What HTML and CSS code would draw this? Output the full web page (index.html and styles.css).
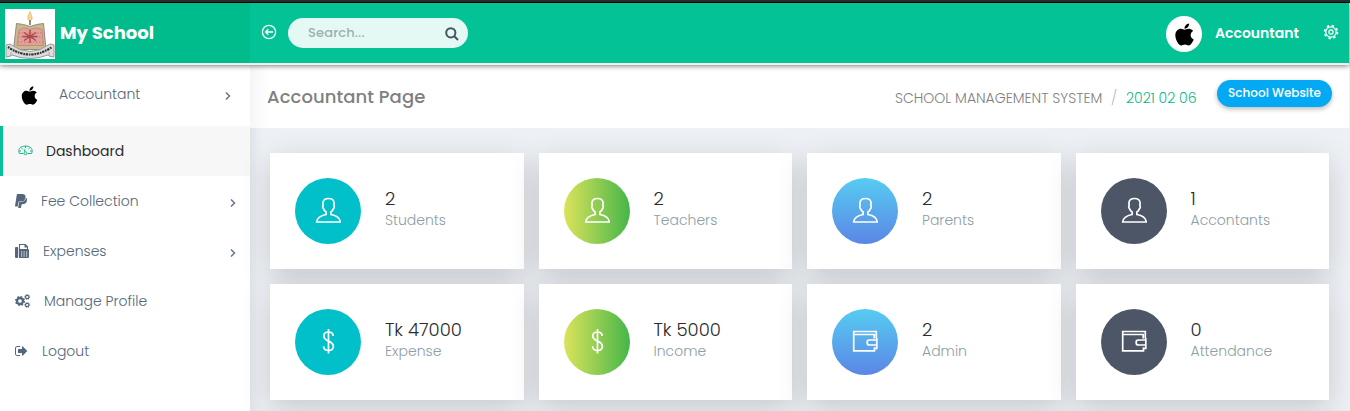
FILE: index.html
```html
<!DOCTYPE html>
<html lang="en">
<head>
<meta charset="utf-8">
<title>Accountant Page</title>
<link rel="stylesheet" href="styles.css">
</head>
<body>
<svg class="defs" width="0" height="0">
  <symbol id="apple" viewBox="0 0 384 512"><path d="M318.7 268.7c-.2-36.7 16.4-64.4 50-84.8-18.8-26.9-47.2-41.7-84.7-44.6-35.5-2.8-74.3 20.7-88.500 20.7-15 0-49.4-19.7-76.4-19.7C63.3 141.2 4 184.8 4 273.5q0 39.3 14.4 81.2c12.8 36.7 59 126.700 107.2 125.2 25.2-.6 43-17.9 75.8-17.9 31.8 0 48.3 17.9 76.4 17.9 48.6-.7 90.4-82.5 102.6-119.3-65.2-30.7-61.7-90-61.7-91.9zm-56.6-164.2c27.3-32.4 24.8-61.9 24-72.5-24.1 1.4-52 16.4-67.9 34.9-17.5 19.8-27.8 44.3-25.6 71.9 26.1 2 49.9-11.4 69.5-34.3z"/></symbol>
  <symbol id="person" viewBox="0 0 26 26"><path d="M13.500 1.500c-3.700 0-5.600 2-5.600 4.800 0 1 .3 1.700.2 2.500-.7.800-.3 2.400.5 2.900.3 1.300 1.300 2.500 2.500 3.300v2.500C6.500 18.300 2.200 20.500 1.700 25H25.300C24.800 20.500 20.500 18.300 15.900 17.500v-2.500c1.200-.8 2.200-2 2.500-3.300.8-.5 1.200-2.100.5-2.900-.1-.8.2-1.500.2-2.500C19.100 3.500 17.200 1.500 13.500 1.500z"/></symbol>
  <symbol id="dollar" viewBox="0 0 26 26"><path d="M13.500 1v24.500M18.200 8C18.200 5.500 16.500 4 13.500 4S8.800 5.500 8.800 8c0 6 9.600 4.300 9.600 10.300 0 2.800-1.800 4.200-4.900 4.200s-4.900-1.400-4.900-4.200"/></symbol>
  <symbol id="wallet" viewBox="0 0 26 26"><path d="M24.300 10.500V3.500H1.700v19.300h20.800v-3.600M1.700 6.500h20.500v4M24.800 12h-7.300c-1.500 0-2.300.8-2.300 1.800v1.200c0 1.300.8 2 2.300 2h7.300zM24.800 10v10.500h-2.300"/></symbol>
  <symbol id="chevron" viewBox="0 0 8 10"><path d="M2 1.500 5.500 5 2 8.500"/></symbol>
</svg>

<div class="window-edge"></div>
<header class="topbar">
  <div class="brand">
    <svg class="crest" viewBox="0 0 50 50">
      <path class="crest-flame" d="M25 1c-1 4-3 5-2.500 9 .3 2 4.500 2 5 0 .5-4-1.700-5-2.500-9z"/>
      <path class="crest-core" d="M25 5v6"/>
      <path class="crest-wick" d="M25 11v5"/>
      <path class="crest-book" d="M11.500 14.500q7 .5 13.500 3 6.500-2.500 13.500-3L41 40.500H8.500z"/>
      <path class="crest-map" d="M14 21l5-2 6 1.500 6-1.500 6 1.500 1.500 16H12z"/>
      <path class="crest-pattern" d="M14 24h23M13 28h25M13 33h25"/>
      <path class="crest-star" d="M25 21v13M19 23.500l12 8M19 31.500l12-8M17.500 27.500h15"/>
      <path class="crest-ribbon" d="M1 36l4-1q20 15 40 0l4 1v12l-5-1-1-1q-18 7-36 0l-1 1-5 1z"/>
      <path class="crest-motto" d="M3 38q22 15 44 0"/>
      <path class="crest-fold" d="M6 47v-4M44 47v-4"/>
    </svg>
    <span class="brand-name">My School</span>
  </div>
  <svg class="collapse" viewBox="0 0 16 16"><circle cx="8" cy="8" r="6.600"/><path d="M12 8H4.500M7.300 5.200 4.500 8l2.800 2.800"/></svg>
  <div class="search">
    <span class="search-hint">Search...</span>
    <svg class="search-icon" viewBox="0 0 14 14"><circle cx="5.800" cy="5.800" r="4.600"/><path d="M9.300 9.300l3.700 3.700"/></svg>
  </div>
  <div class="account">
    <span class="avatar"><svg><use href="#apple"/></svg></span>
    <span class="account-name">Accountant</span>
    <svg class="gear" viewBox="0 0 16 16"><circle class="gear-teeth" cx="8" cy="8" r="6.400"/><circle cx="8" cy="8" r="5.200"/><circle cx="8" cy="8" r="2.100"/></svg>
  </div>
</header>

<div class="shell">
  <nav class="sidebar">
    <a class="item profile">
      <svg class="profile-icon"><use href="#apple"/></svg>
      <span class="t-profile">Accountant</span>
      <svg class="chevron"><use href="#chevron"/></svg>
    </a>
    <a class="item active">
      <svg class="icon gauge" viewBox="0 0 15 15"><path d="M5.500 11.500H1.500C-.8 7.500 2.500 4 7.500 4s8.300 3.500 6 7.500H9.500M7.500 4v2M3.300 5.800l1.300 1.200M11.700 5.800l-1.300 1.200M1 9h2M12 9h2M6 7l1 3"/><circle cx="7.500" cy="11.300" r="1.500"/></svg>
      <span class="t-dash">Dashboard</span>
    </a>
    <a class="item">
      <svg class="icon paypal" viewBox="0 0 384 512"><path d="M111.400 295.900c-3.500 19.200-17.400 108.700-21.500 134-.3 1.800-1 2.500-3 2.500H12.300c-7.600 0-13.100-6.600-12.100-13.900L58.800 46.600c1.500-9.600 10.100-16.900 20-16.900 152.300 0 165.100-3.700 204 11.400 60.100 23.300 65.600 79.500 44 140.300-21.500 62.600-72.500 89.500-140.100 90.300-43.400.7-69.500-7-75.300 24.200zM357.100 152c-1.800-1.300-2.500-1.800-3 1.300-2 11.400-5.100 22.500-8.800 33.600-39.900 113.800-150.500 103.900-204.500 103.900-6.100 0-10.100 3.300-10.900 9.400-22.600 140.400-27.100 169.700-27.100 169.700-1 7.100 3.500 12.900 10.600 12.900h63.500c8.600 0 15.700-6.300 17.400-14.900.7-5.400-1.100 6.100 14.400-91.300 4.600-22 14.300-19.700 29.300-19.700 71 0 126.400-28.800 142.900-112.300 6.500-34.800 4.600-71.400-23.800-92.600z"/></svg>
      <span class="t-fee">Fee Collection</span>
      <svg class="chevron"><use href="#chevron"/></svg>
    </a>
    <a class="item">
      <svg class="icon fax" viewBox="0 0 14 14"><path fill-rule="evenodd" d="M0 4q0-1 1-1h1.200q1 0 1 1v9q0 1-1 1H1q-1 0-1-1zM4 0h6.500L13 2.500V5q1 .3 1 1.200V13q0 1-1 1H4zM5 1v4h7V3.500h-2.500V1zM6 7.500v1h1.200v-1zM8.500 7.500v1h1.200v-1zM11 7.500v1h1.200v-1zM6 9.500v1h1.200v-1zM8.500 9.500v1h1.200v-1zM11 9.500v1h1.200v-1zM6 11.500v1h1.200v-1zM8.500 11.500v1h1.200v-1zM11 11.500v1h1.200v-1z"/></svg>
      <span class="t-exp">Expenses</span>
      <svg class="chevron"><use href="#chevron"/></svg>
    </a>
    <a class="item">
      <svg class="icon cogs" viewBox="0 0 15 14"><circle class="ring" cx="5" cy="7" r="3"/><circle class="teeth" cx="5" cy="7" r="4.400"/><circle class="ring-s" cx="12.200" cy="3" r="1.700"/><circle class="teeth-s" cx="12.200" cy="3" r="2.500"/><circle class="ring-s" cx="12.200" cy="11" r="1.700"/><circle class="teeth-s" cx="12.200" cy="11" r="2.500"/></svg>
      <span class="t-manage">Manage Profile</span>
    </a>
    <a class="item">
      <svg class="icon exit" viewBox="0 0 1664 1792"><path d="M640 1440q0 4 1 20t.5 26.500-3 23.500-10 19.500-20.500 6.500h-320q-119 0-203.500-84.500t-84.500-203.500v-704q0-119 84.500-203.500t203.500-84.500h320q13 0 22.500 9.500t9.500 22.500q0 4 1 20t.5 26.500-3 23.500-10 19.500-20.500 6.500h-320q-66 0-113 47t-47 113v704q0 66 47 113t113 47h312l11.500 1 11.500 3 8 5.500 7 9 2 13.500zm928-544q0 26-19 45l-544 544q-19 19-45 19t-45-19-19-45v-288h-448q-26 0-45-19t-19-45v-384q0-26 19-45t45-19h448v-288q0-26 19-45t45-19 45 19l544 544q19 19 19 45z"/></svg>
      <span class="t-logout">Logout</span>
    </a>
  </nav>

  <main class="main">
    <div class="titlebar">
      <h1 class="title">Accountant Page</h1>
      <div class="crumbs">
        <span class="system">SCHOOL MANAGEMENT SYSTEM</span>
        <span class="slash">/</span>
        <span class="date">2021 02 06</span>
      </div>
      <a class="site-button">School Website</a>
    </div>
    <section class="cards">
      <article class="card"><span class="badge teal"><svg><use href="#person"/></svg></span><div><div class="value">2</div><div class="label">Students</div></div></article>
      <article class="card"><span class="badge lime"><svg><use href="#person"/></svg></span><div><div class="value">2</div><div class="label">Teachers</div></div></article>
      <article class="card"><span class="badge blue"><svg><use href="#person"/></svg></span><div><div class="value">2</div><div class="label">Parents</div></div></article>
      <article class="card"><span class="badge slate"><svg><use href="#person"/></svg></span><div><div class="value">1</div><div class="label">Accontants</div></div></article>
      <article class="card"><span class="badge teal"><svg><use href="#dollar"/></svg></span><div><div class="value">Tk 47000</div><div class="label">Expense</div></div></article>
      <article class="card"><span class="badge lime"><svg><use href="#dollar"/></svg></span><div><div class="value">Tk 5000</div><div class="label">Income</div></div></article>
      <article class="card"><span class="badge blue"><svg><use href="#wallet"/></svg></span><div><div class="value">2</div><div class="label">Admin</div></div></article>
      <article class="card"><span class="badge slate"><svg><use href="#wallet"/></svg></span><div><div class="value">0</div><div class="label">Attendance</div></div></article>
    </section>
  </main>
</div>
</body>
</html>
```
FILE: styles.css
```css
* { box-sizing: border-box; }
html, body { height: 100%; overflow: hidden; }
body {
  margin: 0;
  display: flex;
  flex-direction: column;
  background: #edf1f5;
  font-family: Poppins, Inter, "Open Sans", sans-serif;
  font-weight: 300;
  font-size: 14px;
  color: #54667a;
}
svg { display: block; flex: none; overflow: visible; }
span, h1, .value, .label, .site-button { white-space: nowrap; }
.defs { display: none; }

.window-edge { flex: none; height: 3px; background: #2d2d30; border-bottom: 1px solid #000; }

.topbar {
  position: relative;
  z-index: 2;
  flex: none;
  height: 62px;
  width: 1349px;
  display: flex;
  background: #03c396;
  border-bottom: 2px solid #f0f0f0;
  box-shadow: 0 1px 5px rgba(0, 0, 0, .5);
}
.brand { width: 250px; padding: 6px 0 0 5px; display: flex; background: #00bb8b; }
.crest { width: 50px; height: 50px; background: #fff; margin-right: 5px; }
.crest path { fill: none; stroke-width: 1; }
.crest .crest-flame { fill: #f3c27c; }
.crest .crest-core { stroke: #fff0c0; }
.crest .crest-wick { stroke: #74644f; stroke-width: 1.500; }
.crest .crest-book { fill: #c8b98d; stroke: #8f8b80; }
.crest .crest-map { fill: #dfa29b; stroke: #c98880; }
.crest .crest-pattern { stroke: #c97570; stroke-dasharray: 1.500 1.500; }
.crest .crest-star { stroke: #b0454a; stroke-width: 1.500; }
.crest .crest-ribbon { fill: #dcdcdc; stroke: #999; }
.crest .crest-motto { stroke: #333; stroke-width: 2.200; stroke-dasharray: 1.600 .7 2.500 .8; }
.crest .crest-fold { stroke: #aaa; }
.brand-name { color: #fff; font-size: 18px; font-weight: 700; line-height: 48px; }
.collapse { width: 16px; height: 16px; margin: 21px 11px 0; fill: none; stroke: #fff; stroke-width: 1.300; }
.search {
  width: 180px;
  height: 30px;
  margin-top: 15px;
  padding: 0 9px 0 20px;
  display: flex;
  align-items: center;
  justify-content: space-between;
  border-radius: 15px;
  background: #e5f9f4;
}
.search-hint { color: #9eb0b2; font-size: 13px; font-weight: 500; letter-spacing: .15px; }
.search-icon { width: 14px; height: 14px; margin-top: 1px; fill: none; stroke: #465366; stroke-width: 2; }
.account { margin-left: auto; padding-right: 10.500px; display: flex; align-items: flex-start; }
.avatar { width: 36px; height: 36px; margin: 13px 13px 0 0; display: flex; justify-content: center; border-radius: 50%; background: #fff; fill: #000; }
.avatar svg { width: 19px; height: 25px; margin-top: 5.500px; }
.account-name { width: 84px; margin-right: 23.500px; color: #fff; font-weight: 600; line-height: 60px; }
.gear { width: 16px; height: 16px; margin-top: 21px; fill: none; stroke: #fff; stroke-width: 1.200; }
.gear-teeth { stroke-width: 1.800; stroke-dasharray: 2.300 2.726; }

.shell { flex: 1; display: flex; min-height: 0; }
.sidebar { flex: none; width: 250px; background: #fff; }
.item { height: 50px; padding: 0 14px 0 15px; display: flex; align-items: center; }
.profile { height: 61px; padding: 0 19px 2px 21px; }
.profile-icon { width: 17px; height: 21px; margin: 1px 21px 0 0; fill: #000; }
.profile .chevron { margin-top: 2px; }
.active { padding-left: 15px; border-left: 3px solid #03c396; background: #f7f7f7; color: #2b2b2b; font-weight: 400; }
.icon { fill: #54667a; }
.gauge { width: 15px; height: 15px; margin-right: 13px; fill: none; stroke: #18bb8a; stroke-width: 1; margin-top: -3px; }
.paypal { width: 12px; height: 16px; margin-right: 14px; }
.fax { width: 14px; height: 14px; margin-right: 14px; }
.cogs { width: 15px; height: 14px; margin-right: 14px; fill: none; stroke: #54667a; }
.ring { stroke-width: 2.300; }
.teeth { stroke-width: 1.300; stroke-dasharray: 1.800 1.656; }
.ring-s { stroke-width: 1.200; }
.teeth-s { stroke-width: .8; stroke-dasharray: 1 .963; }
.exit { width: 13px; height: 14px; margin-right: 14px; }
.chevron { width: 8px; height: 10px; margin: 4px -1px 0 auto; fill: none; stroke: #66768a; stroke-width: 1.500; }

.main { flex: 1; box-shadow: inset 10px 0 14px -8px rgba(0, 0, 0, .09); }
.titlebar { height: 63px; margin-right: 1px; padding: 0 17px; display: flex; background: linear-gradient(90deg, #f6f6f6, #fff 20px); }
.title { margin: 0; color: #808080; font-size: 18px; font-weight: 500; line-height: 63px; letter-spacing: .08px; }
.crumbs { margin-left: auto; display: flex; line-height: 66px; color: #808080; }
.system { width: 207px; }
.slash { width: 24px; text-align: center; color: #bbb; }
.date { width: 70px; margin-right: 21px; color: #03b98c; }
.site-button {
  width: 115px;
  height: 27px;
  margin-top: 15px;
  border-radius: 14px;
  background: #03a9f3;
  color: #fff;
  font-size: 12px;
  font-weight: 500;
  line-height: 26px;
  text-align: center;
  box-shadow: 0 2px 5px rgba(0, 0, 0, .28);
}
.cards { padding: 25px 21px 0 20px; display: grid; grid-template-columns: repeat(4, 1fr); gap: 15px; }
.card { height: 116px; padding: 25px; display: flex; gap: 24px; background: #fff; box-shadow: 0 8px 28px rgba(0, 0, 0, .17); }
.badge { flex: none; width: 66px; height: 66px; display: flex; align-items: center; justify-content: center; border-radius: 50%; }
.badge svg { width: 26px; height: 26px; margin-top: -3px; fill: none; stroke: #fff; stroke-width: 1.700; }
.teal { background: #02c0ca; }
.lime { background: linear-gradient(90deg, #dce35b, #45b649); }
.blue { background: linear-gradient(#56ccf2, #5b86e5); }
.slate { background: #4c5667; }
.value { margin-top: 9px; color: #2b2b2b; font-size: 18px; line-height: 24px; }
.label { margin-top: -1px; color: #8d9ea7; line-height: 20px; }
```
